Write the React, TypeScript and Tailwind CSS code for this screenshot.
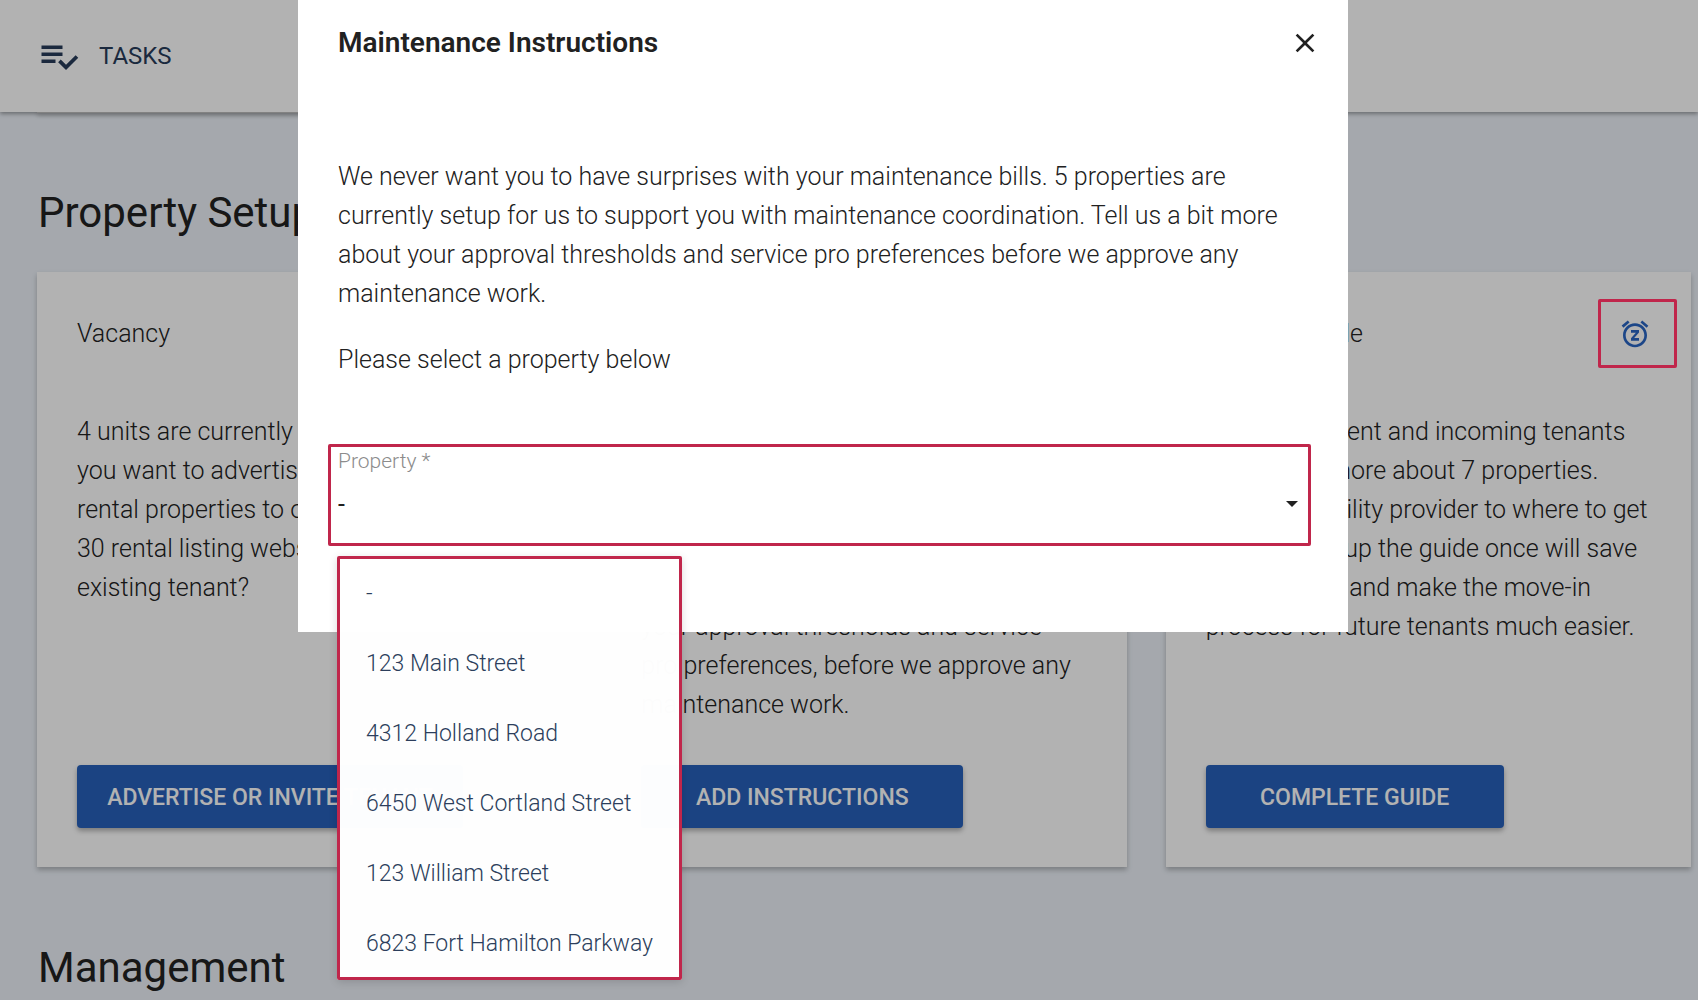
import React from "react";

const properties = [
  "-",
  "123 Main Street",
  "4312 Holland Road",
  "6450 West Cortland Street",
  "123 William Street",
  "6823 Fort Hamilton Parkway",
];

function Lines({ lines }: { lines: string[] }) {
  return (
    <>
      {lines.map((line, i) => (
        <React.Fragment key={line}>
          {i > 0 && <br />}
          {line}
        </React.Fragment>
      ))}
    </>
  );
}

function TasksIcon() {
  return (
    <svg viewBox="0 0 24 24" className="size-[42px] shrink-0" fill="currentColor" aria-hidden="true">
      <path d="M14 10H2v2h12v-2zm0-4H2v2h12V6zM2 16h8v-2H2v2zm19.5-4.5L23 13l-6.99 7-4.51-4.5L13 14l3.01 3 5.49-5.5z" />
    </svg>
  );
}

function SnoozeIcon() {
  return (
    <svg viewBox="0 0 24 24" className="size-8" fill="currentColor" aria-hidden="true">
      <path d="M7.88 3.39L6.6 1.86 2 5.71l1.29 1.53 4.59-3.85zM22 5.72l-4.6-3.86-1.29 1.53 4.6 3.86L22 5.72zM12 4c-4.97 0-9 4.03-9 9s4.02 9 9 9c4.97 0 9-4.03 9-9s-4.03-9-9-9zm0 16c-3.87 0-7-3.13-7-7s3.13-7 7-7 7 3.13 7 7-3.13 7-7 7zm-3-9h3.63L9 15.2V17h6v-2h-3.63L15 10.8V9H9v2z" />
    </svg>
  );
}

function CloseIcon() {
  return (
    <svg viewBox="0 0 24 24" className="size-8" fill="currentColor" aria-hidden="true">
      <path d="M19 6.41L17.59 5 12 10.59 6.41 5 5 6.41 10.59 12 5 17.59 6.41 19 12 13.41 17.59 19 19 17.59 13.41 12z" />
    </svg>
  );
}

type CardProps = {
  title: string;
  lines: string[];
  action: string;
  buttonWidth: string;
  snooze?: boolean;
};

function Card({ title, lines, action, buttonWidth, snooze }: CardProps) {
  return (
    <article className="flex min-h-[595px] min-w-0 flex-1 flex-col bg-white shadow-[0_3px_5px_rgba(0,0,0,0.25)]">
      <div className="flex h-[123px] items-center justify-between pr-[14px] pl-10">
        <h2 className="text-[25px] leading-[39px] font-[350]">{title}</h2>
        {snooze && (
          <button
            type="button"
            aria-label="Snooze"
            className="relative z-30 flex h-[69px] w-[79px] items-center justify-center rounded-xs border-3 border-[#c0264b] pr-1 text-[#1c4688]"
          >
            <SnoozeIcon />
          </button>
        )}
      </div>
      <p className="grow px-10 pt-[17px] text-[25px] leading-[39px] font-[350] whitespace-nowrap">
        <Lines lines={lines} />
      </p>
      <div className="px-10 pb-[39px]">
        <button
          type="button"
          className={`h-[63px] ${buttonWidth} rounded bg-[#2761bb] pt-[2px] text-[23px] leading-none font-medium whitespace-nowrap text-white shadow-[0_3px_5px_rgba(0,0,0,0.3)]`}
        >
          {action}
        </button>
      </div>
    </article>
  );
}

export default function App() {
  return (
    <div className="relative h-screen overflow-hidden bg-[#ecf1f8] font-[Roboto,sans-serif] text-[#212121]">
      <header className="relative z-10 flex h-28 items-center gap-[19px] bg-white pl-[38px] text-[#283c5a] shadow-[0_2px_4px_rgba(0,0,0,0.35)]">
        <TasksIcon />
        <h1 className="text-[24px] leading-9">TASKS</h1>
      </header>

      <main className="pr-[7px] pl-[37px]">
        <div className="h-px w-1/3 bg-white shadow-[0_2px_4px_rgba(0,0,0,0.6)]" />
        <h2 className="pt-[70px] pl-px text-[42px] leading-[60px]">Property Setup</h2>
        <section className="mt-[29px] flex gap-[39px]">
          <Card
            title="Vacancy"
            lines={[
              "4 units are currently vacant. Do",
              "you want to advertise your",
              "rental properties to over",
              "30 rental listing websites or an",
              "existing tenant?",
            ]}
            action="ADVERTISE OR INVITE TENANT"
            buttonWidth="w-[386px]"
          />
          <Card
            title="Maintenance Instructions"
            lines={[
              "We never want you to have",
              "surprises with your bills.",
              "5 properties are currently setup",
              "for maintenance coordination.",
              "Tell us a bit more about",
              "your approval thresholds and service",
              "pro preferences, before we approve any",
              "maintenance work.",
            ]}
            action="ADD INSTRUCTIONS"
            buttonWidth="w-[322px]"
          />
          <Card
            title="Move-In Guide"
            lines={[
              "Get your current and incoming tenants",
              "them learn more about 7 properties.",
              "From their utility provider to where to get",
              "mail, setting up the guide once will save",
              "tenants time and make the move-in",
              "process for future tenants much easier.",
            ]}
            action="COMPLETE GUIDE"
            buttonWidth="w-[298px]"
            snooze
          />
        </section>
        <h2 className="mt-[71px] pl-px text-[42px] leading-[60px]">Management</h2>
      </main>

      <div className="absolute inset-0 z-20 bg-black/30" />

      <div className="pointer-events-none absolute inset-0 z-40 flex items-start pr-[350px] pl-[298px]">
        <div
          role="dialog"
          aria-labelledby="dialog-title"
          className="pointer-events-auto relative min-h-[632px] grow bg-white px-[27px]"
        >
          <div className="flex items-center justify-between pt-[22px] pl-[13px]">
            <h2 id="dialog-title" className="text-[28px] leading-[42px] font-semibold">
              Maintenance Instructions
            </h2>
            <button type="button" aria-label="Close" className="flex">
              <CloseIcon />
            </button>
          </div>
          <p className="pt-[93px] pl-[13px] text-[25px] leading-[39px] font-[350] whitespace-nowrap">
            <Lines
              lines={[
                "We never want you to have surprises with your maintenance bills. 5 properties are",
                "currently setup for us to support you with maintenance coordination. Tell us a bit more",
                "about your approval thresholds and service pro preferences before we approve any",
                "maintenance work.",
              ]}
            />
          </p>
          <p className="pt-[27px] pl-[13px] text-[25px] leading-[39px] font-[350]">Please select a property below</p>
          <div className="relative mt-[65px] mr-[10px] ml-[3px] h-[102px] rounded-xs border-3 border-[#c0264b]">
            <label htmlFor="property" className="block pl-[7px] text-[21px] leading-7 font-light text-[#8c8c8c]">
              Property *
            </label>
            <select
              id="property"
              className="block h-[60px] w-full appearance-none bg-transparent pl-[7px] text-[25px] outline-none"
            >
              {properties.map((name) => (
                <option key={name}>{name}</option>
              ))}
            </select>
            <svg
              viewBox="0 0 12 6"
              className="pointer-events-none absolute top-[54px] right-[10px] h-[6px] w-3"
              fill="currentColor"
              aria-hidden="true"
            >
              <path d="M0 0h12L6 6z" />
            </svg>
          </div>
          <ul
            role="listbox"
            aria-label="Property"
            className="absolute top-[556px] left-[39px] w-[345px] rounded-xs bg-white/99 pt-[3px] pb-px text-[23px] font-[350] text-[#2c3e5c] shadow-[0_2px_8px_rgba(0,0,0,0.15)] outline-3 -outline-offset-3 outline-[#c0264b]"
          >
            {properties.map((name) => (
              <li key={name} role="option" aria-selected={name === "-"} className="flex h-[70px] items-center pl-[29px]">
                {name}
              </li>
            ))}
          </ul>
        </div>
      </div>
    </div>
  );
}
